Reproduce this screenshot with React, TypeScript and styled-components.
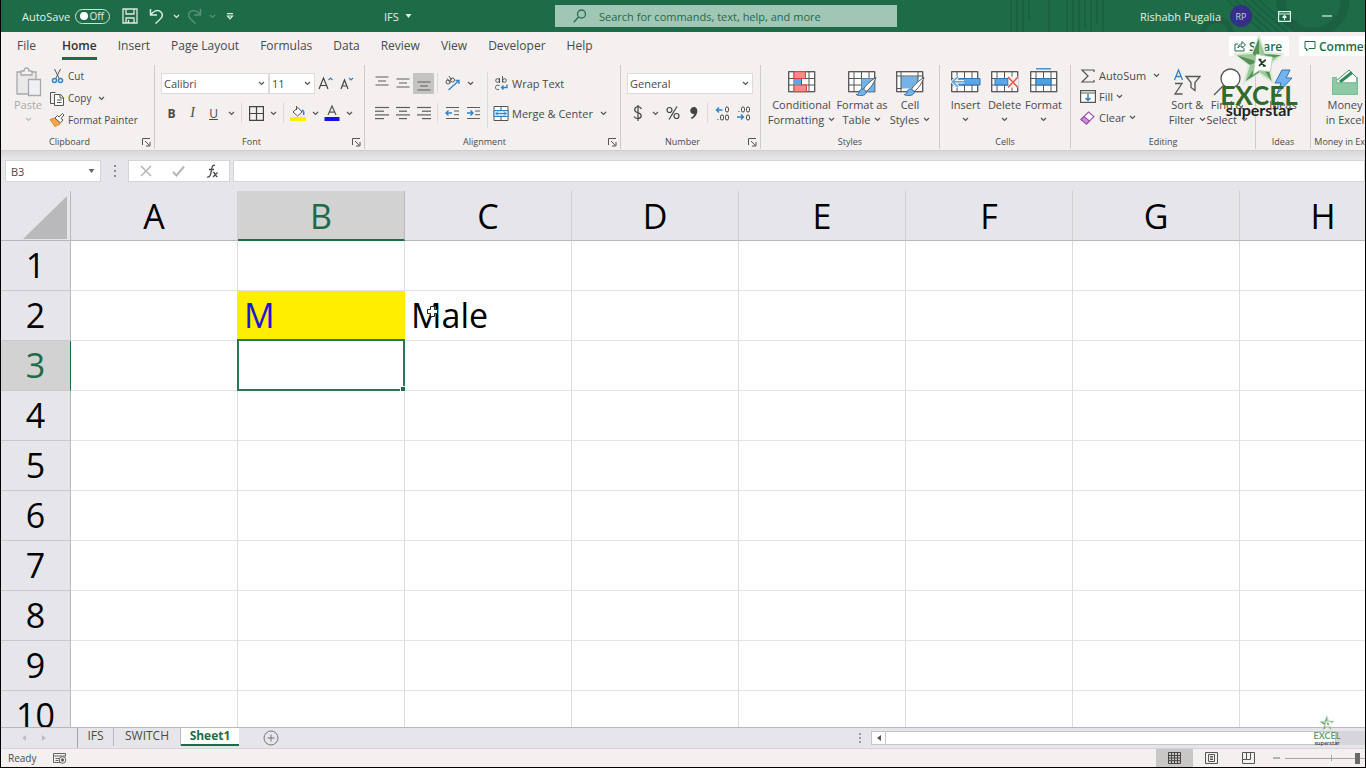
import React from "react";
import styled, { createGlobalStyle, css } from "styled-components";

const GREEN = "#1e6b48";
const INK = "#4a4a4a";
const BLUE = "#2f83c9";
const UI_FONT = '"Open Sans", "Noto Sans", sans-serif';

const GlobalStyle = createGlobalStyle`
  * { box-sizing: border-box; }
  body { margin: 0; background: #000; font-family: ${UI_FONT}; color: ${INK}; overflow: hidden; }
  button, input, select { font: inherit; color: inherit; border: 0; padding: 0; margin: 0; background: none; outline: 0; }
  svg { flex: none; }
`;

const Window = styled.div`
  position: relative;
  display: flex;
  flex-direction: column;
  height: 100vh;
  overflow: hidden;
  border: solid #000;
  border-width: 0 1px 1px 1px;
  background: #e6e6ea;
`;

/* ---------- title bar ---------- */

const TitleBar = styled.header`
  position: relative;
  flex: none;
  display: flex;
  align-items: center;
  height: 32px;
  background: ${GREEN};
  color: #e3f0e9;
  font-size: 11px;
`;
const TitleArt = styled.svg`
  position: absolute;
  top: 0;
  right: 0;
`;
const QuickAccess = styled.div`
  flex: 0 0 383px;
  display: flex;
  align-items: center;
  padding-left: 21px;
`;
const AutoSave = styled.label`
  display: flex;
  align-items: center;
  gap: 5px;
  margin-right: 10px;
`;
const Toggle = styled.span`
  position: relative;
  display: flex;
  align-items: center;
  justify-content: flex-end;
  width: 35px;
  height: 15px;
  padding-right: 5px;
  border: 1px solid #cfe3d8;
  border-radius: 8px;
  font-size: 10px;
  line-height: 13px;
  &::before {
    content: "";
    position: absolute;
    left: 4px;
    width: 8px;
    height: 8px;
    border-radius: 50%;
    background: #fff;
  }
`;
const ToggleInput = styled.input`
  position: absolute;
  inset: 0;
  width: 100%;
  height: 100%;
  opacity: 0;
`;
const BarButton = styled.button<{ $w: number; $dim?: boolean }>`
  display: flex;
  align-items: center;
  justify-content: center;
  width: ${(p) => p.$w}px;
  height: 24px;
  opacity: ${(p) => (p.$dim ? 0.3 : 1)};
`;
const DocName = styled.button`
  flex: 0 0 171px;
  display: flex;
  align-items: center;
  gap: 6px;
`;
const SearchBox = styled.label`
  flex: 0 1 342px;
  display: flex;
  align-items: center;
  gap: 12px;
  height: 22px;
  padding-left: 18px;
  background: #a0c7b4;
  color: #25694b;
`;
const SearchInput = styled.input`
  flex: 1;
  min-width: 0;
  font-size: 11px;
  &::placeholder { color: #25694b; opacity: 1; }
`;
const Account = styled.div`
  position: relative;
  display: flex;
  align-items: center;
  margin-left: auto;
  padding-right: 7px;
`;
const Avatar = styled.span`
  display: flex;
  align-items: center;
  justify-content: center;
  width: 22px;
  height: 22px;
  margin: 0 20px 0 9px;
  border-radius: 50%;
  background: #352f86;
  color: #c9c9ee;
  font-size: 9px;
`;

/* ---------- ribbon ---------- */

const TabRow = styled.nav`
  flex: none;
  display: flex;
  align-items: flex-start;
  height: 29px;
  padding-left: 5px;
  background: #f3f0ef;
  font-size: 12px;
`;
const RibbonTab = styled.button<{ $active?: boolean }>`
  height: 28px;
  margin: 0 10px 0 11px;
  padding-top: 3px;
  line-height: 22px;
  border-bottom: 3px solid transparent;
  &:first-child { margin-right: 15px; }
  ${(p) =>
    p.$active &&
    css`
      font-weight: 600;
      color: #333;
      border-color: ${GREEN};
    `}
`;
const TabActions = styled.div`
  display: flex;
  gap: 10px;
  margin: 4px -15px 0 auto;
`;
const ActionButton = styled.button<{ $w: number }>`
  display: flex;
  align-items: center;
  gap: 3px;
  width: ${(p) => p.$w}px;
  height: 20px;
  padding-left: 5px;
  border-radius: 2px;
  background: #fff;
  color: ${GREEN};
  font-weight: 600;
  white-space: nowrap;
`;
const Ribbon = styled.div`
  flex: none;
  display: flex;
  height: 90px;
  padding: 4px 0 1px;
  overflow: hidden;
  background: #f3f0ef;
  border-bottom: 1px solid #d0cecf;
  font-size: 11px;
`;
const Group = styled.section<{ $w: number }>`
  flex: 0 0 ${(p) => p.$w}px;
  display: flex;
  flex-direction: column;
  border-right: 1px solid #cfcdcc;
`;
const GroupBody = styled.div<{ $pad?: number }>`
  flex: 1;
  display: flex;
  padding-left: ${(p) => p.$pad ?? 6}px;
`;
const GroupFooter = styled.div`
  display: flex;
  align-items: center;
  height: 14px;
`;
const GroupLabel = styled.span`
  flex: 1;
  text-align: center;
  font-size: 9px;
  line-height: 14px;
  white-space: nowrap;
`;
const Launcher = styled.button`
  display: flex;
  align-items: center;
  justify-content: center;
  width: 16px;
  height: 12px;
`;
const Rows = styled.div<{ $row: number; $top?: number }>`
  display: grid;
  grid-auto-rows: ${(p) => p.$row}px;
  align-content: start;
  align-items: center;
  padding-top: ${(p) => p.$top ?? 0}px;
`;
const Row = styled.div`
  display: flex;
  align-items: center;
`;
const Tool = styled.button<{ $w?: number; $on?: boolean }>`
  display: flex;
  align-items: center;
  justify-content: center;
  width: ${(p) => p.$w ?? 21}px;
  height: 21px;
  font-size: 12px;
  ${(p) => p.$on && css`background: #c6c4c3;`}
`;
const ItalicMark = styled.i`
  font-family: "Liberation Serif", serif;
  font-size: 14px;
`;
const Divider = styled.span<{ $h?: number }>`
  align-self: center;
  width: 1px;
  height: ${(p) => p.$h ?? 20}px;
  margin: 0 4px 0 3px;
  background: #dddbda;
`;
const TextTool = styled.button<{ $small?: boolean }>`
  display: flex;
  align-items: center;
  gap: 3px;
  height: 21px;
  white-space: nowrap;
  font-size: ${(p) => (p.$small ? 10 : 11)}px;
`;
const BigTool = styled.button<{ $w: number; $dim?: boolean }>`
  display: flex;
  flex-direction: column;
  align-items: center;
  width: ${(p) => p.$w}px;
  height: 64px;
  padding-top: 2px;
  line-height: 15px;
  white-space: nowrap;
  color: ${(p) => (p.$dim ? "#aaa8a8" : INK)};
`;
const BigIcon = styled.span`
  display: flex;
  align-items: center;
  height: 30px;
`;
const BigLine = styled.span`
  display: flex;
  align-items: center;
  justify-content: center;
  gap: 4px;
  height: 15px;
`;
const SelectBox = styled.label<{ $w: number }>`
  display: flex;
  align-items: center;
  width: ${(p) => p.$w}px;
  height: 21px;
  padding: 0 3px 0 2px;
  background: #fff;
  border: 1px solid #dedcdb;
`;
const Select = styled.select`
  flex: 1;
  min-width: 0;
  appearance: none;
  font-size: 11px;
`;

/* ---------- formula bar ---------- */

const FormulaRow = styled.div`
  flex: none;
  display: flex;
  align-items: center;
  height: 40px;
  padding-left: 4px;
  background: linear-gradient(#d9d9da, #e6e6ea 8px);
  font-size: 11px;
`;
const NameBox = styled.label`
  display: flex;
  align-items: center;
  width: 96px;
  height: 22px;
  padding: 0 5px;
  background: #fff;
  border: 1px solid #d5d5d8;
`;
const NameInput = styled.input`
  flex: 1;
  min-width: 0;
  font-size: 11px;
`;
const FormulaButtons = styled.div`
  display: flex;
  align-items: center;
  justify-content: space-around;
  width: 102px;
  height: 22px;
  margin: 0 3px 0 11px;
  background: #fff;
  border: 1px solid #d5d5d8;
`;
const FormulaInput = styled.input`
  flex: 1;
  min-width: 0;
  height: 22px;
  background: #fff;
  border: 1px solid #d5d5d8;
`;
const Grip = styled.svg`
  margin-left: 13px;
`;

/* ---------- sheet ---------- */

const SheetArea = styled.main`
  position: relative;
  flex: 1;
  min-height: 0;
  overflow: hidden;
  background: #fff;
`;
const Sheet = styled.table`
  table-layout: fixed;
  width: max-content;
  border-collapse: separate;
  border-spacing: 0;
  color: #000;
  font-size: 34px;
  line-height: 46px;
`;
const Col = styled.col<{ $w: number }>`
  width: ${(p) => p.$w}px;
`;
const Corner = styled.td`
  height: 50px;
  padding: 0;
  background: #e6e6ea;
  border: solid #b9b9bd;
  border-width: 0 1px 1px 0;
  svg { display: block; margin: 3px 0 0 22px; }
`;
const ColHead = styled.th<{ $on: boolean }>`
  height: 50px;
  padding: ${(p) => (p.$on ? 1 : 0)}px 0 0;
  font-weight: 400;
  background: ${(p) => (p.$on ? "#d2d2d3" : "#e6e6ea")};
  color: ${(p) => (p.$on ? GREEN : "#000")};
  border-right: 1px solid ${(p) => (p.$on ? "#b9b9bd" : "#d0d0d3")};
  border-bottom: ${(p) => (p.$on ? `2px solid ${GREEN}` : "1px solid #b9b9bd")};
`;
const RowHead = styled.th<{ $on: boolean }>`
  height: 50px;
  padding: 0 0 2px;
  font-weight: 400;
  background: ${(p) => (p.$on ? "#d2d2d3" : "#e6e6ea")};
  color: ${(p) => (p.$on ? GREEN : "#000")};
  border-right: 1px solid ${(p) => (p.$on ? GREEN : "#b9b9bd")};
  border-bottom: 1px solid #c9c9cc;
`;
const Cell = styled.td<{ $fill?: string; $ink?: string; $selected?: boolean }>`
  position: relative;
  height: 50px;
  padding: 0 0 2px 6px;
  color: ${(p) => p.$ink ?? "#000"};
  background: ${(p) => p.$fill ?? "#fff"};
  border-right: 1px solid ${(p) => p.$fill ?? "#d9dfdd"};
  border-bottom: 1px solid ${(p) => p.$fill ?? "#e1e4e3"};
  ${(p) =>
    p.$selected &&
    css`
      &::before {
        content: "";
        position: absolute;
        inset: -2px -1px -1px -1px;
        border: 2px solid #2c7552;
      }
      &::after {
        content: "";
        position: absolute;
        right: -2px;
        bottom: -2px;
        width: 5px;
        height: 5px;
        background: ${GREEN};
        border: solid #fff;
        border-width: 1px 0 0 1px;
      }
    `}
`;
const Pointer = styled.svg`
  position: absolute;
  left: 425px;
  top: 114px;
`;

/* ---------- sheet tabs, status bar ---------- */

const SheetBar = styled.div`
  flex: none;
  display: flex;
  align-items: flex-start;
  height: 22px;
  background: #e6e6ea;
  border-top: 1px solid #b9b9bd;
  border-bottom: 1px solid #d5d5d8;
  font-size: 12px;
`;
const SheetNav = styled.div`
  display: flex;
  align-items: center;
  gap: 16px;
  width: 77px;
  height: 20px;
  padding-left: 21px;
  border-right: 1px solid #a5a5a8;
`;
const SheetTab = styled.button<{ $w: number; $active?: boolean }>`
  width: ${(p) => p.$w}px;
  height: 18px;
  padding-bottom: 3px;
  line-height: 13px;
  border-right: 1px solid #b9b9bd;
  ${(p) =>
    p.$active &&
    css`
      padding-bottom: 2px;
      background: #fff;
      color: ${GREEN};
      font-weight: 700;
      border-right: 0;
      border-bottom: 2px solid ${GREEN};
    `}
`;
const AddSheet = styled.button`
  display: flex;
  height: 20px;
  align-items: center;
  margin-left: 24px;
`;
const ScrollArea = styled.div`
  flex: 0 0 506px;
  display: flex;
  align-items: center;
  gap: 9px;
  height: 20px;
  margin-left: auto;
`;
const ScrollTrack = styled.div`
  flex: 1;
  display: flex;
  height: 14px;
  background: #d6d6da;
`;
const ScrollButton = styled.button`
  display: flex;
  align-items: center;
  justify-content: center;
  width: 15px;
  height: 14px;
  background: #fff;
  border: 1px solid #c6c6ca;
`;
const ScrollThumb = styled.div`
  flex: 0 1 450px;
  background: #fff;
  border: 1px solid #c6c6ca;
  border-left: 0;
`;
const StatusBar = styled.footer`
  flex: none;
  display: flex;
  align-items: center;
  height: 18px;
  padding-left: 7px;
  background: #f3f0ef;
  font-size: 10px;
`;
const StatusText = styled.span`
  margin-right: 17px;
`;
const ViewTools = styled.div`
  display: flex;
  align-items: center;
  margin-left: auto;
`;
const ViewButton = styled.button<{ $on?: boolean }>`
  display: flex;
  align-items: center;
  justify-content: center;
  width: 37px;
  height: 18px;
  background: ${(p) => (p.$on ? "#c9c7c6" : "transparent")};
`;
const ZoomOut = styled.button`
  display: flex;
  align-items: center;
  justify-content: center;
  width: 18px;
  height: 18px;
`;
const ZoomSlider = styled.input`
  width: 80px;
  height: 16px;
  appearance: none;
  background: linear-gradient(#a9a7a6, #a9a7a6) 0 8px / 100% 1px no-repeat,
    linear-gradient(#a9a7a6, #a9a7a6) 46px 5px / 1px 6px no-repeat;
  &::-webkit-slider-thumb {
    appearance: none;
    width: 5px;
    height: 11px;
    background: #6b6a69;
  }
`;

/* ---------- watermark ---------- */

const Brand = styled.div<{ $small?: boolean }>`
  position: absolute;
  z-index: 2;
  right: ${(p) => (p.$small ? 24 : 65)}px;
  ${(p) => (p.$small ? "bottom: 22px" : "top: 35px")};
  width: ${(p) => (p.$small ? 28 : 82)}px;
  display: flex;
  flex-direction: column;
  align-items: center;
  pointer-events: none;
  opacity: ${(p) => (p.$small ? 0.8 : 1)};
`;
const BrandName = styled.span<{ $small?: boolean }>`
  font: 700 ${(p) => (p.$small ? "9px/9px" : "26px/20px")} Lato, sans-serif;
  color: ${(p) => (p.$small ? "#3f8a4c" : "#2f6b2b")};
`;
const BrandSub = styled.span<{ $small?: boolean }>`
  font: 700 ${(p) => (p.$small ? "6px/5px" : "16px/10px")} Lato, sans-serif;
  color: #222;
`;

/* ---------- icons ---------- */

type IconProps = { w: number; h: number; children: React.ReactNode; stroke?: string; sw?: number };
const Icon = ({ w, h, children, stroke = "#555", sw = 1 }: IconProps) => (
  <svg width={w} height={h} viewBox={`0 0 ${w} ${h}`} fill="none" stroke={stroke} strokeWidth={sw} aria-hidden="true">
    {children}
  </svg>
);

const Chevron = ({ color = "#555" }: { color?: string }) => (
  <Icon w={7} h={5} stroke={color} sw={1.2}>
    <path d="M1 1l2.500 2.500L6 1" />
  </Icon>
);
const Caret = ({ color = "#666" }: { color?: string }) => (
  <Icon w={7} h={4} stroke="none">
    <path d="M.5 0h6L3.500 4z" fill={color} />
  </Icon>
);
const ChevTool = ({ label }: { label: string }) => (
  <Tool $w={14} aria-label={label}>
    <Chevron />
  </Tool>
);

const Lines = ({ rows }: { rows: [number, number][] }) => (
  <Icon w={14} h={14} stroke="#5e5e5e" sw={1.2}>
    {rows.map(([a, b], i) => (
      <path key={i} d={`M${a} ${1.5 + i * 3.7}H${b}`} />
    ))}
  </Icon>
);

const VLines = ({ top }: { top: number }) => (
  <Icon w={14} h={18} stroke="#5e5e5e" sw={1.2}>
    <path d={`M.5 ${top}h13M3 ${top + 4}h8M.5 ${top + 8}h13`} />
  </Icon>
);

const TableGrid = ({ children }: { children?: React.ReactNode }) => (
  <>
    <rect x=".7" y="3.7" width="26" height="20" fill="#fff" />
    <path d="M.7 3.700h26v20H.700zM.7 10.500h26M.7 17h26M6 3.700v20M13.500 3.700v20M21 3.700v20" />
    {children}
  </>
);
const Brush = () => (
  <>
    <path d="M28 9.500C22 13 17 18 15.500 21.500l2.500 2C22 21 26 15 28 9.500z" fill="#fff" stroke="#555" />
    <path d="M15.500 21c-3-.5-4 1.500-4.500 3.500-.5 1.500-2 2-3 2 4 2 9.500 1.500 10.500-2.500z" fill="#73b3e8" stroke="#2f74b5" />
  </>
);
const Star = ({ size }: { size: number }) => (
  <svg width={size} height={size} viewBox="0 0 52 52" aria-hidden="true">
    <path d="M26 1l6.500 17.500L51 20 36.500 31.500 41 50 26 39.500 10 50l5.500-18.500L1 20l18.500-1.500z" fill="#9cc99a" stroke="#dcecd9" strokeWidth="2" />
    <path d="M26 3l-6.500 16L26 28zM3 21l13 10L26 28zM12 48l14-9V28zM39 48l-4-17L26 28zM49 21l-17-1-6 8z" fill="#568f58" />
    <path d="M23 20l17 3-2 15-12-1-6 4z" fill="#fff" stroke="#b7d3b2" />
    <path d="M26.500 25.500l5 6.500M33 25.500l-7 6.500M25.500 25.500h3M30 32h3" stroke="#1f3d20" strokeWidth="1.800" />
  </svg>
);

/* ---------- data ---------- */

const TABS = ["File", "Home", "Insert", "Page Layout", "Formulas", "Data", "Review", "View", "Developer", "Help"];
const COLUMNS = ["A", "B", "C", "D", "E", "F", "G", "H"];
const ROWS = [1, 2, 3, 4, 5, 6, 7, 8, 9, 10];
const CELLS: Record<string, { text: string; fill?: string; ink?: string }> = {
  B2: { text: "M", fill: "#ffee00", ink: "#1a17d6" },
  C2: { text: "Male" },
};

const Footer = ({ label, launcher }: { label: string; launcher?: boolean }) => (
  <GroupFooter>
    <GroupLabel>{label}</GroupLabel>
    {launcher && (
      <Launcher aria-label={`${label} settings`}>
        <Icon w={9} h={9}>
          <path d="M.5 7V.5H8M3 3l4.500 4.500M8 4v4H4" />
        </Icon>
      </Launcher>
    )}
  </GroupFooter>
);

type BigProps = { w: number; lines: string[]; menu?: boolean; dim?: boolean; children: React.ReactNode };
const Big = ({ w, lines, menu, dim, children }: BigProps) => (
  <BigTool $w={w} $dim={dim}>
    <BigIcon>{children}</BigIcon>
    {lines.map((t, i) => (
      <BigLine key={i}>
        {t}
        {menu && i === lines.length - 1 && <Chevron color={dim ? "#bbb" : "#555"} />}
      </BigLine>
    ))}
  </BigTool>
);

export default function App() {
  return (
    <Window>
      <GlobalStyle />
      <TitleBar>
        <TitleArt width="360" height="32" fill="none" aria-hidden="true">
          <g stroke="#1b6141" strokeWidth="2">
            <path d="M6 0v32M12 0v32M18 0v32M24 0v20M44 0v32M62 0v32M68 0v32M74 0v32M80 0v28M86 0v32M92 0v24M98 0v32" />
            <path d="M222 0l36 32M230 0l36 32M238 0l36 32M246 0l36 32M254 0l36 32" />
          </g>
          <circle cx="212" cy="34" r="14" stroke="#1b6141" strokeWidth="6" />
          <circle cx="308" cy="0" r="32" stroke="#1b6141" strokeWidth="9" />
        </TitleArt>
        <QuickAccess>
          <AutoSave>
            AutoSave
            <Toggle>
              Off
              <ToggleInput type="checkbox" aria-label="AutoSave" />
            </Toggle>
          </AutoSave>
          <BarButton $w={20} aria-label="Save">
            <Icon w={16} h={16} stroke="#dcebe3" sw={1.3}>
              <path d="M1 1h14v14H1zM4 1v5h8V1M4 15v-5h8v5M6.500 12v3" />
            </Icon>
          </BarButton>
          <BarButton $w={32} aria-label="Undo">
            <Icon w={15} h={16} stroke="#dcebe3" sw={1.5}>
              <path d="M1.500 1v6H8M1.500 7C4 3 9 1 12 4c3 3.500 1 6-5.500 11.500" />
            </Icon>
          </BarButton>
          <BarButton $w={8} aria-label="Undo history">
            <Chevron color="#dcebe3" />
          </BarButton>
          <BarButton $w={28} $dim aria-label="Redo">
            <Icon w={15} h={16} stroke="#dcebe3" sw={1.5}>
              <path d="M13.500 1v6H7M13.500 7C11 3 6 1 3 4c-3 3.500-1 6 5.500 11.500" />
            </Icon>
          </BarButton>
          <BarButton $w={8} $dim aria-label="Redo history">
            <Chevron color="#dcebe3" />
          </BarButton>
          <BarButton $w={28} aria-label="Customize Quick Access Toolbar">
            <Icon w={8} h={7} stroke="#dcebe3" sw={1.2}>
              <path d="M1 .6h6M1.500 3h5L4 5.800z" />
            </Icon>
          </BarButton>
        </QuickAccess>
        <DocName>
          IFS <Caret color="#e3f0e9" />
        </DocName>
        <SearchBox>
          <Icon w={14} h={14} stroke="#2c6e50" sw={1.3}>
            <circle cx="8.500" cy="5" r="4" />
            <path d="M5.700 8L.7 13.300" />
          </Icon>
          <SearchInput type="search" aria-label="Search" placeholder="Search for commands, text, help, and more" />
        </SearchBox>
        <Account>
          Rishabh Pugalia
          <Avatar>RP</Avatar>
          <BarButton $w={24} aria-label="Ribbon display options">
            <Icon w={13} h={11} stroke="#e3f0e9" sw={1.2}>
              <path d="M.6.600h11.800v9.800H.600zM.6 3h12M6.500 9V4.500M4.500 6.500l2-2 2 2" />
            </Icon>
          </BarButton>
          <BarButton $w={62} aria-label="Minimize">
            <Icon w={10} h={2} stroke="#e3f0e9" sw={1.2}>
              <path d="M0 1h10" />
            </Icon>
          </BarButton>
        </Account>
      </TitleBar>

      <TabRow>
        {TABS.map((t) => (
          <RibbonTab key={t} $active={t === "Home"}>
            {t}
          </RibbonTab>
        ))}
        <TabActions>
          <ActionButton $w={60}>
            <Icon w={12} h={12} stroke={GREEN}>
              <path d="M4 4H1v7h9V8M4 8c0-3 2-4 4-4V1.500L11.500 5 8 8V6C6 6 5 6.500 4 8z" />
            </Icon>
            Share
          </ActionButton>
          <ActionButton $w={81}>
            <Icon w={12} h={12} stroke={GREEN}>
              <path d="M1 1.500h10v7H5L2.500 11V8.500H1z" />
            </Icon>
            Comments
          </ActionButton>
        </TabActions>
      </TabRow>

      <Ribbon>
        <Group $w={154}>
          <GroupBody $pad={7}>
            <Big w={40} lines={["Paste", ""]} menu dim>
              <Icon w={27} h={30} stroke="#a9a9ab" sw={1.3}>
                <path d="M2 5h19v22H2z" fill="#e9e9ea" />
                <path d="M6 8V4h3c0-4 5-4 5 0h3v4z" fill="#f3f0ef" />
                <path d="M13.500 12.500h12v16h-12z" fill="#eef1f4" />
              </Icon>
            </Big>
            <Rows $row={22}>
              <TextTool $small>
                <Icon w={17} h={16} stroke="#555">
                  <path d="M6.500 1l5 10M12.500 1l-5 10" />
                  <circle cx="6.500" cy="12.500" r="2" stroke={BLUE} strokeWidth="1.500" />
                  <circle cx="12.500" cy="12.500" r="2" stroke={BLUE} strokeWidth="1.500" />
                </Icon>
                Cut
              </TextTool>
              <Row>
                <TextTool $small>
                  <Icon w={17} h={15} stroke="#555">
                    <path d="M6.500 12.500H2.500V1.500h5" />
                    <path d="M6.500 3.500h6l3 3v8h-9zM12 3.500v3.500h3.500M9 9h4.500M9 11.500h4.500" fill="#fff" />
                  </Icon>
                  Copy
                </TextTool>
                <Tool $w={20} aria-label="Copy options"><Chevron /></Tool>
              </Row>
              <TextTool $small>
                <Icon w={17} h={15} stroke="#555">
                  <path d="M2 6.500l5 7 5-2.500L6.500 5z" fill="#f4a64a" stroke="#e08a25" />
                  <path d="M7 5l5.500 5L15 7l-2-1.500L16 2 14.500.700 11 4 9.500 2.500z" fill="#fff" />
                </Icon>
                Format Painter
              </TextTool>
            </Rows>
          </GroupBody>
          <Footer label="Clipboard" launcher />
        </Group>

        <Group $w={210}>
          <GroupBody>
            <Rows $row={30} $top={3}>
              <Row>
                <SelectBox $w={108}>
                  <Select aria-label="Font">
                    <option>Calibri</option>
                  </Select>
                  <Chevron />
                </SelectBox>
                <SelectBox $w={46}>
                  <Select aria-label="Font size">
                    <option>11</option>
                  </Select>
                  <Chevron />
                </SelectBox>
                <Tool aria-label="Increase font size">
                  <Icon w={15} h={15} stroke="#444" sw={1.2}>
                    <path d="M1 13L5.500 2 10 13M2.500 9.500h6" />
                    <path d="M10.500 4L12.500 2l2 2" stroke={BLUE} />
                  </Icon>
                </Tool>
                <Tool aria-label="Decrease font size">
                  <Icon w={15} h={15} stroke="#444" sw={1.2}>
                    <path d="M2 13l3.500-9L9 13M3.200 10h4.600" />
                    <path d="M10 2l2 2 2-2" stroke={BLUE} />
                  </Icon>
                </Tool>
              </Row>
              <Row>
                <Tool aria-label="Bold"><b>B</b></Tool>
                <Tool aria-label="Italic"><ItalicMark>I</ItalicMark></Tool>
                <Tool aria-label="Underline"><u>U</u></Tool>
                <ChevTool label="Underline options" />
                <Divider />
                <Tool $w={20} aria-label="Borders">
                  <Icon w={15} h={15} stroke="#444" sw={1.2}>
                    <path d="M.6.600h13.800v13.800H.600zM7.500.600v13.800M.6 7.500h13.800" />
                  </Icon>
                </Tool>
                <ChevTool label="Border options" />
                <Divider />
                <Tool $w={20} aria-label="Fill color">
                  <Icon w={16} h={16} stroke="#555">
                    <path d="M3 7l5-4.500 4 4.500-4.500 4zM6.500 1v4" fill="#fff" />
                    <path d="M12 5c2 1 2 3 1.500 5" stroke={BLUE} strokeWidth="1.600" />
                    <path d="M0 12h16v4H0z" fill="#ffee00" stroke="none" />
                  </Icon>
                </Tool>
                <ChevTool label="Fill options" />
                <Tool $w={20} aria-label="Font color">
                  <Icon w={16} h={16} stroke="#555" sw={1.2}>
                    <path d="M4 10L8 1l4 9M5.500 7.200h5" />
                    <path d="M.5 12h15v4H.500z" fill="#1412e0" stroke="none" />
                  </Icon>
                </Tool>
                <ChevTool label="Font color options" />
              </Row>
            </Rows>
          </GroupBody>
          <Footer label="Font" launcher />
        </Group>

        <Group $w={256}>
          <GroupBody>
            <Rows $row={30} $top={3}>
              <Row>
                <Tool aria-label="Top align"><VLines top={3} /></Tool>
                <Tool aria-label="Middle align"><VLines top={5} /></Tool>
                <Tool $on aria-label="Bottom align"><VLines top={8} /></Tool>
                <Divider />
                <Tool aria-label="Orientation">
                  <Icon w={17} h={15} stroke="#555">
                    <circle cx="4" cy="6" r="2" />
                    <path d="M3 2.500L6.500 7" />
                    <circle cx="8.500" cy="4" r="2" />
                    <path d="M5 0l2.500 4" />
                    <path d="M4.500 14L15 4.500M11.500 4.500H15V8" stroke={BLUE} strokeWidth="1.300" />
                  </Icon>
                </Tool>
                <ChevTool label="Orientation options" />
              </Row>
              <Row>
                <Tool aria-label="Align left"><Lines rows={[[0, 14], [0, 9], [0, 14], [0, 9]]} /></Tool>
                <Tool aria-label="Center"><Lines rows={[[0, 14], [3, 11], [0, 14], [3, 11]]} /></Tool>
                <Tool aria-label="Align right"><Lines rows={[[0, 14], [5, 14], [0, 14], [5, 14]]} /></Tool>
                <Divider />
                <Tool aria-label="Decrease indent">
                  <Icon w={15} h={14} stroke="#5e5e5e">
                    <path d="M1 1.500h13M9 5h5M9 8.700h5M1 12.500h13" />
                    <path d="M7 7H1M3.500 4.500L1 7l2.500 2.500" stroke={BLUE} strokeWidth="1.400" />
                  </Icon>
                </Tool>
                <Tool aria-label="Increase indent">
                  <Icon w={15} h={14} stroke="#5e5e5e">
                    <path d="M1 1.500h13M9 5h5M9 8.700h5M1 12.500h13" />
                    <path d="M1 7h6M4.500 4.500L7 7 4.500 9.500" stroke={BLUE} strokeWidth="1.400" />
                  </Icon>
                </Tool>
              </Row>
            </Rows>
            <Divider $h={56} />
            <Rows $row={30} $top={3}>
              <TextTool>
                <Icon w={17} h={15} stroke="#555">
                  <circle cx="5.500" cy="4.500" r="1.800" />
                  <path d="M7.500 2v5M10.500 0v6.500" />
                  <circle cx="12.500" cy="4.500" r="1.800" />
                  <path d="M7.500 9.500c-3-1-4 .5-4 2s1.500 2.500 3.500 2" />
                  <path d="M15 8.500v3H9.500M11.500 9.500l-2 2 2 2" stroke={BLUE} strokeWidth="1.400" />
                </Icon>
                Wrap Text
              </TextTool>
              <Row>
                <TextTool>
                  <Icon w={17} h={15} stroke="#555">
                    <path d="M2 .500h14v14H2z" fill="#fff" />
                    <path d="M2 4.500h14v6H2z" fill="#cfe6f8" stroke={BLUE} />
                    <path d="M9 .500v4M9 10.500v4" />
                    <path d="M4 7.500h10M6 5.500l-2 2 2 2M12 5.500l2 2-2 2" stroke={BLUE} />
                  </Icon>
                  Merge &amp; Center
                </TextTool>
                <Tool $w={22} aria-label="Merge options"><Chevron /></Tool>
              </Row>
            </Rows>
          </GroupBody>
          <Footer label="Alignment" launcher />
        </Group>

        <Group $w={140}>
          <GroupBody>
            <Rows $row={30} $top={3}>
              <SelectBox $w={126}>
                <Select aria-label="Number format">
                  <option>General</option>
                </Select>
                <Chevron />
              </SelectBox>
              <Row>
                <Tool aria-label="Accounting format">
                  <Icon w={10} h={16} stroke="#444" sw={1.2}>
                    <path d="M8.500 4C6-.5 1 2 1.800 5.500 2.500 8.500 8 7 8.200 10.500 8.300 14 3 14.500 1 11.500M5 0v16" />
                  </Icon>
                </Tool>
                <ChevTool label="Currency options" />
                <Tool aria-label="Percent style">
                  <Icon w={14} h={14} stroke="#444" sw={1.2}>
                    <circle cx="3.500" cy="4" r="2.500" />
                    <circle cx="10.500" cy="10" r="2.500" />
                    <path d="M11 .500L3 13.500" />
                  </Icon>
                </Tool>
                <Tool aria-label="Comma style">
                  <Icon w={8} h={12} stroke="none">
                    <path d="M4 0c5 0 4.500 9-2.500 12l-.5-1.500C3 9.500 4 8.500 4 7-1 7.500-1 0 4 0z" fill="#444" />
                  </Icon>
                </Tool>
                <Divider />
                <Tool aria-label="Increase decimal">
                  <Icon w={16} h={15} stroke="#444">
                    <path d="M7.500 4H1.500M4 1.500L1.500 4 4 6.500" stroke={BLUE} strokeWidth="1.400" />
                    <rect x="10.500" y="1" width="3" height="5" rx="1.500" />
                    <rect x="5.500" y="9" width="3" height="5" rx="1.500" />
                    <rect x="10.500" y="9" width="3" height="5" rx="1.500" />
                    <path d="M2.500 13.500h1" />
                  </Icon>
                </Tool>
                <Tool aria-label="Decrease decimal">
                  <Icon w={16} h={15} stroke="#444">
                    <path d="M1 11h6.500M5 8.500L7.500 11 5 13.500" stroke={BLUE} strokeWidth="1.400" />
                    <rect x="10.500" y="1" width="3" height="5" rx="1.500" />
                    <rect x="5.500" y="1" width="3" height="5" rx="1.500" />
                    <rect x="10.500" y="9" width="3" height="5" rx="1.500" />
                    <path d="M2.500 5.500h1" />
                  </Icon>
                </Tool>
              </Row>
            </Rows>
          </GroupBody>
          <Footer label="Number" launcher />
        </Group>

        <Group $w={179}>
          <GroupBody $pad={7}>
            <Big w={67} lines={["Conditional", "Formatting"]} menu>
              <Icon w={28} h={28}>
                <TableGrid>
                  <path d="M6 3.700h11.500v6.800H6zM6 17h12.500v6.700H6z" fill="#ff8a8a" stroke="#e04545" />
                  <path d="M6 11h7v5.500H6z" fill="#5aa6e6" stroke="none" />
                </TableGrid>
              </Icon>
            </Big>
            <Big w={54} lines={["Format as", "Table"]} menu>
              <Icon w={29} h={28}>
                <TableGrid>
                  <path d="M13.500 10.500h13v13h-13z" fill="#73b3e8" stroke="none" />
                </TableGrid>
                <Brush />
              </Icon>
            </Big>
            <Big w={42} lines={["Cell", "Styles"]} menu>
              <Icon w={29} h={28}>
                <rect x=".7" y="3.700" width="26" height="20" fill="#fff" />
                <path d="M5 8.500h17v12H5z" fill="#73b3e8" stroke="none" />
                <path d="M.7 3.700h26v20H.700zM.7 8h26M.7 20.500h5M5 3.700v20M22 3.700v10" />
                <Brush />
              </Icon>
            </Big>
          </GroupBody>
          <Footer label="Styles" />
        </Group>

        <Group $w={131}>
          <GroupBody>
            <Big w={39} lines={["Insert", ""]} menu>
              <Icon w={30} h={28}>
                <TableGrid />
                <path d="M8 10.500h21v6.500H8z" fill="#5aa6e6" stroke="#2f74b5" />
                <path d="M13 13.700H1.500M7 8.500l-5.500 5.200L7 19" stroke="#f3f0ef" strokeWidth="3.500" />
                <path d="M13 13.700H1.500M7 8.500l-5.500 5.200L7 19" stroke="#5aa6e6" strokeWidth="1.600" />
              </Icon>
            </Big>
            <Big w={39} lines={["Delete", ""]} menu>
              <Icon w={28} h={28}>
                <TableGrid>
                  <path d="M4 10.500h13V17H4z" fill="#5aa6e6" stroke="#2f74b5" />
                </TableGrid>
                <path d="M17.500 8.500h10v11h-10z" fill="#f3f0ef" stroke="none" />
                <path d="M17 9l10 10.500M27 9L17 19.500" stroke="#e4574f" strokeWidth="1.500" />
              </Icon>
            </Big>
            <Big w={39} lines={["Format", ""]} menu>
              <Icon w={28} h={28}>
                <TableGrid>
                  <path d="M6 10.500h15V17H6z" fill="#4f9fe3" stroke="#2f74b5" />
                </TableGrid>
                <path d="M6 .800h15" stroke={BLUE} strokeWidth="1.300" />
              </Icon>
            </Big>
          </GroupBody>
          <Footer label="Cells" />
        </Group>

        <Group $w={185}>
          <GroupBody $pad={9}>
            <Rows $row={21}>
              <Row>
                <TextTool>
                  <Icon w={16} h={14} stroke="#555" sw={1.2}>
                    <path d="M14 3V1H2l6 6-6 6h12v-2" />
                  </Icon>
                  AutoSum
                </TextTool>
                <Tool $w={20} aria-label="AutoSum options"><Chevron /></Tool>
              </Row>
              <TextTool>
                <Icon w={16} h={13} stroke="#555" sw={1.2}>
                  <path d="M.6.600h14.800v11.800H.600zM.6 3h15" fill="#fff" />
                  <path d="M8 4v6.500M5.500 8L8 10.500 10.500 8" stroke={BLUE} strokeWidth="1.500" />
                </Icon>
                Fill <Chevron />
              </TextTool>
              <TextTool>
                <Icon w={16} h={14} stroke="#a04fb0" sw={1.1}>
                  <path d="M1 8.500L8.500 1l5.500 4.500L6.500 13z" fill="#fff" />
                  <path d="M1 8.500L4 5.500 9.500 10l-3 3z" fill="#cf8fd8" />
                </Icon>
                Clear <Chevron />
              </TextTool>
            </Rows>
            <Big w={42} lines={["Sort &", "Filter"]} menu>
              <Icon w={28} h={28} stroke="#555" sw={1.3}>
                <path d="M1.500 12L5.500 2l4 10M3 8.500h5" stroke={BLUE} />
                <path d="M2 15.500h7L2 26h7.500" />
                <path d="M13 8.500h14l-5 6v8l-4-3v-5z" />
              </Icon>
            </Big>
            <Big w={38} lines={["Find &", "Select"]} menu>
              <Icon w={28} h={28} stroke="#555" sw={1.3}>
                <circle cx="17.500" cy="10.500" r="9.500" fill="#fff" />
                <path d="M10.500 17.500L1 27" />
              </Icon>
            </Big>
          </GroupBody>
          <Footer label="Editing" />
        </Group>

        <Group $w={55}>
          <GroupBody $pad={4}>
            <Big w={46} lines={["Ideas"]}>
              <Icon w={20} h={28} stroke="#2f74b5">
                <path d="M9 2h8l-4 8h6L4 26l4-11H2z" fill="#73b3f0" />
              </Icon>
            </Big>
          </GroupBody>
          <Footer label="Ideas" />
        </Group>

        <Group $w={70}>
          <GroupBody $pad={9}>
            <Big w={50} lines={["Money", "in Excel"]}>
              <Icon w={28} h={28} stroke="#3f9468">
                <path d="M4 14L18 2l8 8v5H4z" fill="#fff" />
                <path d="M9 14L21 4.500" strokeWidth="3" stroke="#2f8a58" />
                <path d="M1.500 9.500h4V15h20V9.500h1v17h-25z" fill="#8ccaa6" stroke="#7bbd97" />
              </Icon>
            </Big>
          </GroupBody>
          <Footer label="Money in Excel" />
        </Group>
      </Ribbon>

      <FormulaRow>
        <NameBox>
          <NameInput aria-label="Name box" defaultValue="B3" />
          <Caret />
        </NameBox>
        <Grip width="3" height="12" fill="#8d8d90" aria-hidden="true">
          <path d="M0 0h2v2H0zM0 5h2v2H0zM0 10h2v2H0z" />
        </Grip>
        <FormulaButtons>
          <BarButton $w={24} aria-label="Cancel">
            <Icon w={12} h={12} stroke="#b5b5b8" sw={1.5}>
              <path d="M1 1l10 10M11 1L1 11" />
            </Icon>
          </BarButton>
          <BarButton $w={24} aria-label="Enter">
            <Icon w={13} h={12} stroke="#b5b5b8" sw={2}>
              <path d="M1 7l3.500 3.500L12 1.500" />
            </Icon>
          </BarButton>
          <BarButton $w={24} aria-label="Insert function">
            <Icon w={13} h={15} stroke="#4a4a4a" sw={1.3}>
              <path d="M9 1.500C6.500.500 6 3 5.500 6S4.500 14 1 13M3 5.500h5M7 8.500c2-1 2 4.500 4.500 4M11.500 8.500L7 13" />
            </Icon>
          </BarButton>
        </FormulaButtons>
        <FormulaInput aria-label="Formula bar" />
      </FormulaRow>

      <SheetArea>
        <Sheet>
          <colgroup>
            <Col $w={70} />
            {COLUMNS.map((c) => (
              <Col key={c} $w={167} />
            ))}
          </colgroup>
          <thead>
            <tr>
              <Corner>
                <svg width="44" height="43" aria-hidden="true">
                  <path d="M44 0v43H0z" fill="#b9b9bb" />
                </svg>
              </Corner>
              {COLUMNS.map((c) => (
                <ColHead key={c} scope="col" $on={c === "B"}>
                  {c}
                </ColHead>
              ))}
            </tr>
          </thead>
          <tbody>
            {ROWS.map((r) => (
              <tr key={r}>
                <RowHead scope="row" $on={r === 3}>
                  {r}
                </RowHead>
                {COLUMNS.map((c) => {
                  const cell = CELLS[c + r];
                  return (
                    <Cell key={c} $fill={cell?.fill} $ink={cell?.ink} $selected={c + r === "B3"}>
                      {cell?.text}
                    </Cell>
                  );
                })}
              </tr>
            ))}
          </tbody>
        </Sheet>
        <Pointer width="13" height="13" aria-hidden="true">
          <path d="M4.500 1.500h4v3h3v4h-3v3h-4v-3h-3v-4h3z" fill="#fff" stroke="#222" />
        </Pointer>
      </SheetArea>

      <SheetBar>
        <SheetNav>
          <Icon w={4} h={6} stroke="none"><path d="M4 0v6L0 3z" fill="#bdbdc1" /></Icon>
          <Icon w={4} h={6} stroke="none"><path d="M0 0v6l4-3z" fill="#bdbdc1" /></Icon>
        </SheetNav>
        <SheetTab $w={36}>IFS</SheetTab>
        <SheetTab $w={67}>SWITCH</SheetTab>
        <SheetTab $w={58} $active>Sheet1</SheetTab>
        <AddSheet aria-label="New sheet">
          <Icon w={16} h={16} stroke="#777">
            <circle cx="8" cy="8" r="7" />
            <path d="M8 4.500v7M4.500 8h7" />
          </Icon>
        </AddSheet>
        <ScrollArea>
          <svg width="3" height="10" fill="#9a9a9d" aria-hidden="true">
            <path d="M0 0h2v2H0zM0 4h2v2H0zM0 8h2v2H0z" />
          </svg>
          <ScrollTrack>
            <ScrollButton aria-label="Scroll left">
              <Icon w={4} h={6} stroke="none"><path d="M4 0v6L0 3z" fill="#555" /></Icon>
            </ScrollButton>
            <ScrollThumb />
          </ScrollTrack>
        </ScrollArea>
      </SheetBar>

      <StatusBar>
        <StatusText>Ready</StatusText>
        <Icon w={14} h={12} stroke="#666">
          <path d="M7 10.500H.500V1.500h12v3M.5 4h12M2.500 6.500h4M2.500 8.500h3" />
          <circle cx="9.500" cy="8" r="3.300" fill="#f3f0ef" />
          <circle cx="9.500" cy="8" r="1.200" fill="#555" />
        </Icon>
        <ViewTools>
          <ViewButton $on aria-label="Normal view">
            <Icon w={13} h={12} stroke="#444">
              <path d="M.5.500h12v11H.500zM3.500.500v11M6.500.500v11M9.500.500v11M.5 3.500h12M.5 6h12M.5 8.700h12" />
            </Icon>
          </ViewButton>
          <ViewButton aria-label="Page layout view">
            <Icon w={13} h={12} stroke="#555">
              <path d="M.5.500h12v11H.500zM3.500 2.500h6v7h-6zM5 4.500h3M5 6h3M5 7.500h3" />
            </Icon>
          </ViewButton>
          <ViewButton aria-label="Page break preview">
            <Icon w={13} h={12} stroke="#555">
              <path d="M.5.500h12v11H.500zM4.500.500v7H.500M8.500.500v7M4.500 7.500h4" />
            </Icon>
          </ViewButton>
          <ZoomOut aria-label="Zoom out">
            <Icon w={7} h={2} stroke="#777"><path d="M0 1h7" /></Icon>
          </ZoomOut>
          <ZoomSlider type="range" aria-label="Zoom" min={10} max={400} defaultValue={375} />
        </ViewTools>
      </StatusBar>

      <Brand>
        <Star size={50} />
        <BrandName>EXCEL</BrandName>
        <BrandSub>superstar</BrandSub>
      </Brand>
      <Brand $small>
        <Star size={16} />
        <BrandName $small>EXCEL</BrandName>
        <BrandSub $small>superstar</BrandSub>
      </Brand>
    </Window>
  );
}
